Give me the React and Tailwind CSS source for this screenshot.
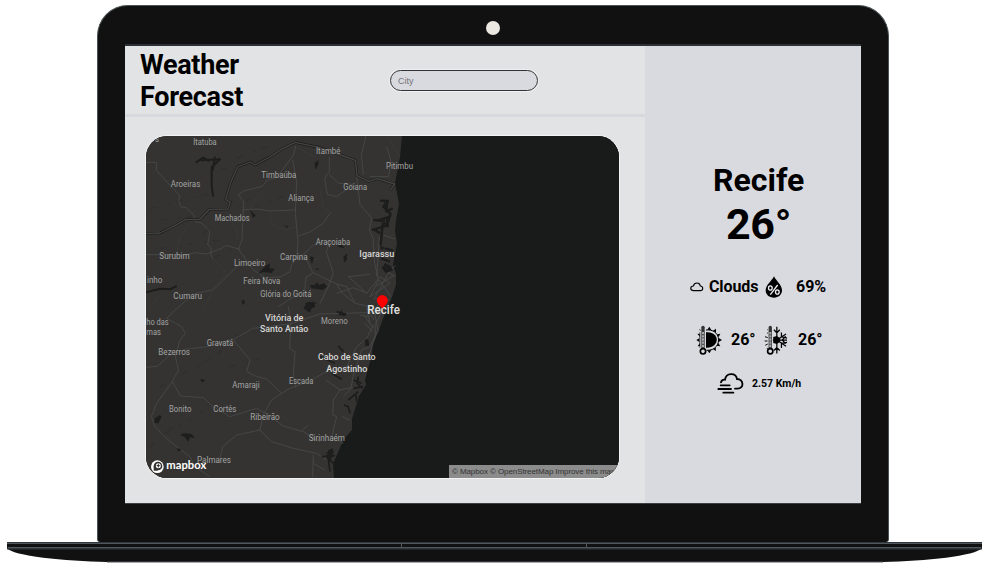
const NORTH_LABELS = [
  ["s", 44, 56, 37], ["Itatuba", 159, 229, 46], ["Itambé", 527, 600, 71],
  ["Pitimbu", 737, 818, 116], ["Timbaúba", 363, 468, 144], ["Aroeiras", 91, 180, 170],
  ["Goiana", 609, 680, 180], ["Aliança", 444, 521, 212], ["Machados", 223, 328, 273],
  ["Surubim", 57, 148, 386], ["Limoeiro", 281, 375, 408], ["Carpina", 419, 502, 389],
  ["Araçoiaba", 526, 630, 345], ["Feira Nova", 309, 420, 463], ["inho", 20, 66, 460],
  ["Cumaru", 99, 185, 506], ["Glória do Goitá", 360, 513, 501],
];

const SOUTH_LABELS = [
  ["ho das", 18, 85, 76], ["mas", 18, 62, 105], ["Gravatá", 199, 279, 137],
  ["Bezerros", 54, 149, 164], ["Moreno", 542, 622, 71], ["Amaraji", 276, 358, 264],
  ["Escada", 446, 519, 253], ["Bonito", 86, 153, 335], ["Cortês", 219, 288, 336],
  ["Ribeirão", 330, 418, 361], ["Sirinhaém", 505, 614, 423], ["Palmares", 170, 272, 490],
];

const CITY_LABELS = [
  ["Vitória de", 374, 489, 62], ["Santo Antão", 359, 504, 96],
  ["Cabo de Santo", 533, 706, 181], ["Agostinho", 558, 681, 215],
];

function Labels({ items, className }) {
  return items.map(([name, x1, x2, y]) => (
    <text key={name} x={x1 + 1} y={y} textLength={x2 - x1} lengthAdjust="spacingAndGlyphs" className={className}>
      {name}
    </text>
  ));
}

const SMALL = "fill-[#a3a3a2] font-[Roboto,sans-serif] text-[26px]";
const LARGE = "fill-[#d8d8d6] font-[Roboto,sans-serif] text-[28px] font-medium";

function Map() {
  return (
    <svg viewBox="146 136 473 342" className="block h-full w-full">
      <rect x="146" y="136" width="473" height="342" fill="#343332" />
      <path d="M402 136 L400 157 L395 183 L399 204 L396 220 L395 231 L397 243 L393 265 L396 274 L396 285 L392 297 L384 316 L378 333 L373 343 L372 354 L365 380 L366 385 L359 396 L352 419 L352 430 L344 439 L339 450 L333 464 L334 478 H619 V136Z" fill="#191b1a" />
      <g transform="translate(140 130) scale(.33333)">
        <g fill="none" stroke="#302f2e" strokeWidth="4" strokeDasharray="22 31 9 18">
          <path d="M30 235L230 185M240 120L430 65M60 270L240 250M290 85L410 40M190 310L330 205M340 235L440 195M60 355L240 330M220 385L300 345" />
        </g>
        <g fill="none" stroke="#454646" strokeWidth="3" strokeLinejoin="round">
          <path d="M18 97L50 97L49 121L87 162L120 198L116 211L122 230L138 233L162 255L160 272L186 280L210 304L203 344L213 352L213 375L220 388" />
          <path d="M467 48L461 75L410 142L382 150L367 169L310 183L295 195L311 215L306 330L295 357L340 419L375 443L420 441L450 425L455 403L470 385L474 335L466 251L470 155L458 90" />
          <path d="M306 240L350 237L390 243L465 240M18 374L138 374L166 368L200 372L247 354L258 346L300 358M305 396L220 479L160 492L105 540" />
          <path d="M568 80L568 124L554 145L562 193L590 200L645 160M568 135L597 160L640 163M647 115L660 223L695 265L688 300L699 324L704 400L716 450L690 500M678 18L664 73L670 133" />
          <path d="M475 388L520 345L550 335M570 250L550 280L508 307L475 318M500 390L518 427L590 462L607 490L646 520L690 530M518 430L498 442L494 479L415 530M570 330L559 366L580 430L567 465L540 520" />
          <path d="M740 50L752 90L746 140L690 140M730 315L765 327M718 320L710 440M718 450L752 500M765 407L743 433L720 475L700 510M765 440L742 425M706 470L763 435M690 500L750 460L720 440L680 490M680 490L625 440L690 433M645 520L620 470L590 462M590 490L640 473L682 490M705 505L750 510" />
        </g>
        <g fill="none" stroke="#3c3c3b" strokeWidth="2">
          <path d="M260 246L285 290L295 325M155 275L120 320L110 375M390 245L393 283L440 300L466 290M370 180L345 205L330 240M220 385L260 430L225 465L190 540M468 50L530 85M575 250L550 230L540 180M550 365L525 390L510 380M60 495L30 535M740 20L780 80" />
        </g>
        <g fill="none" stroke="#1c1d1c" strokeLinejoin="round">
          <path d="M18 310L60 309L106 286L138 268L178 269L208 238L264 237L271 217L257 209L271 160L293 111L330 96L345 105L390 81L427 56L466 37L537 52L610 78L646 91L651 137L687 154L711 146L764 162L750 181" strokeWidth="8" />
          <path d="M18 310L60 309L106 286L138 268L178 269L208 238L264 237L271 217L257 209L271 160L293 111L330 96L345 105L390 81L427 56L466 37L537 52L610 78L646 91L651 137L687 154L711 146L764 162L750 181" strokeWidth="4" stroke="#444443" />
          <path d="M183 91L240 88L215 112L215 170L220 200M167 98L190 83L208 94M225 80L218 120M18 487L60 476L90 478L110 468" strokeWidth="6" />
          <path d="M720 212L744 213L730 230L752 252L743 280L728 281L722 345M742 215L739 244L758 235M696 300L743 286M715 270L750 260M700 270L735 273M700 297L720 310M740 260L744 292M735 355L760 362M733 402L755 420L738 425L727 410M723 385L750 395" strokeWidth="7" />
        </g>
        <g fill="#1d1e1d">
          <path d="M523 100L536 90L535 104L526 119ZM610 380L622 370L620 390L613 398ZM380 405L390 400L388 415L404 416L395 429L370 426L353 432ZM330 240L348 257L338 263ZM508 379L522 382L516 402ZM525 415L540 417L530 420ZM433 285L447 290L440 293ZM503 455L509 465L525 465L530 456L537 465L553 460L561 470L548 480L515 475ZM495 520L520 515L526 530L505 540ZM305 510L315 518L307 525ZM728 410L744 403L756 412L738 430ZM736 210L744 211L740 240L728 230ZM720 345L735 355L723 360ZM592 350L604 340L613 355Z" />
        </g>
        <Labels items={NORTH_LABELS} className={SMALL} />
        <Labels items={[["Igarassu", 657, 762, 381]]} className={LARGE} />
      </g>
      <g transform="translate(140 300) scale(.33333)">
        <g fill="none" stroke="#302f2e" strokeWidth="4" strokeDasharray="16 33 7 20">
          <path d="M140 150L450 60M60 260L260 150M75 400L190 335M270 200L360 175M170 205L300 110M30 440L100 380" />
        </g>
        <g fill="none" stroke="#454646" strokeWidth="3" strokeLinejoin="round">
          <path d="M18 202L52 199L88 167L135 148L200 140L280 118L340 85L450 72L540 42L680 38M106 30L80 55L125 80L136 101L120 120L106 170L116 210L97 245L50 310L34 350L45 380L72 408L105 436L150 470L165 500L210 530" />
          <path d="M97 245L122 288L190 293L220 320L270 350L350 325L385 345L430 378L490 395L540 425M280 120L330 180L320 215L350 230L380 237L425 280L395 300L370 345L360 390L395 425L460 445L530 460L560 480M425 280L450 265L505 245L560 215L620 200L650 140L680 115L700 75M360 390L290 405L248 440L240 475" />
          <path d="M445 20L453 67L449 145L465 155L460 225L468 265M600 270L580 300L578 345L590 350L575 410L610 430M700 20L714 90L690 140L665 150L640 225L633 265L610 290M630 360L605 350M558 240L600 270L640 262M680 25L690 70M520 465L518 530M520 490L555 510M505 375L488 390" />
          <path d="M728 30L705 75L706 110L685 170M680 20L702 60M672 45L700 85M675 70L698 95M715 10L705 50M660 45L690 50" />
        </g>
        <g fill="none" stroke="#1c1d1c" strokeWidth="5">
          <path d="M675 120L685 137M655 230L652 250L667 265M640 265L670 260M648 285L650 305M640 240L665 250M625 300L655 275M612 315L625 320L630 340M560 460L578 455L570 480L580 490M545 470L585 467M565 475L570 515M575 220L605 238M540 170L585 190M590 35L618 43M595 138L610 155" />
        </g>
        <g fill="#1d1e1d">
          <path d="M490 25L505 5L530 8L516 20L510 38ZM595 45L605 28L606 39L620 42L615 48ZM180 241L188 236L195 242L187 247ZM45 355L60 345L65 350L55 370L42 368ZM120 405L130 400L155 402L165 414L150 412L145 425L135 412ZM110 445L125 448L115 455ZM675 120L685 116L687 135L676 138ZM565 450L580 445L570 485L560 475ZM306 2L315 0L310 12Z" />
        </g>
        <Labels items={SOUTH_LABELS} className={SMALL} />
        <Labels items={CITY_LABELS} className={LARGE} />
        <Labels items={[["Recife", 681, 779, 41]]} className="fill-[#e2e2e0] font-[Roboto,sans-serif] text-[37px] font-medium" />
        <circle cx="52" cy="500" r="19" fill="#fff" />
        <circle cx="54" cy="498" r="13" fill="#343332" />
        <path d="M41 498V512H54Z" fill="#343332" />
        <circle cx="55" cy="497" r="7.5" fill="#fff" />
        <path d="M55 490L57 495L62 497L57 499L55 504L53 499L48 497L53 495Z" fill="#343332" />
        <Labels items={[["mapbox", 78, 198, 508]]} className="fill-white font-[Lato,sans-serif] text-[31px] font-bold" />
      </g>
      <path d="M382.3 295.1a5.5 5.5 0 0 1 5.5 5.5c0 2.8-2.6 5-5.5 7.8c-2.9-2.8-5.5-5-5.5-7.8a5.5 5.5 0 0 1 5.5-5.5Z" fill="#f00" />
    </svg>
  );
}

function CloudIcon() {
  return (
    <svg viewBox="31 50 42 30" className="h-[10px] w-[14px]" fill="none" stroke="#000" strokeWidth="3.4">
      <path d="M42 76C30 76 31 62 41 62C44 50 60 50 62 62C72 63 71 76 62 76Z" />
    </svg>
  );
}

function HumidityIcon() {
  return (
    <svg viewBox="255 32 54 66" className="h-[22px] w-[18px]">
      <path d="M282 33C288 46 306 59 306 75C306 89 295 97 282 97C268 97 257 89 257 75C257 59 276 46 282 33Z" />
      <g fill="none" stroke="#eeeef1" strokeWidth="4">
        <path d="M293 59L271 88" />
        <ellipse cx="271" cy="68" rx="5.5" ry="6.5" />
        <ellipse cx="292" cy="80" rx="5.5" ry="6.5" />
      </g>
    </svg>
  );
}

function Thermometer({ x }) {
  return (
    <g transform={`translate(${x} 0)`}>
      <path d="M0 186V250" stroke="#d9dadf" strokeWidth="15" />
      <path d="M0 185V250" stroke="#333" strokeWidth="10" strokeLinecap="round" />
      <path d="M0 199V248" stroke="#a9aaae" strokeWidth="6" strokeDasharray="7 2.5" />
      <circle cx="0" cy="257" r="8" fill="#d9dadf" stroke="#000" strokeWidth="5" />
    </g>
  );
}

function HotIcon() {
  return (
    <svg viewBox="48 178 78 90" className="h-[30px] w-[26px]">
      <path d="M78 200C121 196 121 248 78 246Z" />
      <path d="M78 193C128 188 128 256 80 254" fill="none" stroke="#000" strokeWidth="3" />
      <path d="M82 192L88 183L94 193ZM99 195L108 189L108 201ZM111 206L121 204L116 214ZM116 217L126 223L116 229ZM115 232L121 242L110 240ZM107 245L108 256L99 251ZM94 254L88 263L82 254ZM59 205L52 204L60 214ZM58 218L49 223L58 229ZM59 233L53 242L60 241ZM60 196L58 190L66 194Z" />
      <path d="M60 200V246" stroke="#000" strokeWidth="3" />
      <Thermometer x={69} />
    </svg>
  );
}

function ColdIcon() {
  return (
    <svg viewBox="252 178 76 90" className="h-[30px] w-[25px]">
      <g fill="none" stroke="#000" strokeWidth="3.8">
        <path d="M291 183V264M278 223H322M291 223L319 205M291 223L319 242M282 192L291 201L300 192M282 255L291 246L300 255M305 200V213L322 217M305 247V234L322 230M318 212L307 223L318 234" />
        <path d="M261 201L267 205M255 213L264 216M254 226H263M256 239L264 235M261 250L267 244M262 191L267 195" strokeWidth="3" />
      </g>
      <path d="M280 214L291 211L301 218V228L291 235L280 232Z" />
      <Thermometer x={271} />
    </svg>
  );
}

function WindIcon() {
  return (
    <svg viewBox="112 323 81 63" className="h-[21px] w-[27px]" fill="none" stroke="#000" strokeWidth="5.5" strokeLinecap="round">
      <path d="M124 351C125 345 131 342 136 343C139 321 169 321 172 341C192 341 195 370 173 370H166M123 360H150M116 371H154M131 382H161" />
    </svg>
  );
}

export default function App() {
  return (
    <main className="flex h-[570px] w-[988px] flex-col items-center overflow-hidden bg-white pt-[5px] font-[Roboto,sans-serif] text-black">
      <section className="mr-[2px] flex h-[537px] w-[792px] shrink-0 flex-col items-center rounded-t-[31px] rounded-b-[3px] border border-b-0 border-[#4b5356] bg-[#111]">
        <div className="flex h-[40px] w-[736px] shrink-0 items-center justify-center border-b-2 border-[#2b3036] pt-[5px]">
          <span className="size-[14px] rounded-full bg-[#ebe7e1]" />
        </div>
        <div className="flex h-[458px] w-[736px] shrink-0 border-b border-[#3d4043]">
          <div className="flex w-[520px] flex-col bg-[#e2e3e5]">
            <header className="flex h-[71px] shrink-0 border-b-[3px] border-[#d8d9df]">
              <h1 className="ml-[15px] w-[130px] pt-[3px] text-[27px] leading-[32px] font-bold tracking-[-0.3px]">Weather Forecast</h1>
              <input
                placeholder="City"
                className="mt-[24px] ml-[120px] h-[21px] w-[148px] rounded-full border border-[#333] bg-[#d9dadf] px-[7px] font-['Liberation_Sans',sans-serif] text-[9px] outline-none ring-1 ring-[#f0f0f2] placeholder:text-[#74757a]"
              />
            </header>
            <div className="mt-[19px] ml-[21px] grid h-[342px] w-[473px] overflow-hidden rounded-[21px] bg-[#191b1a] ring-1 ring-[#f3f3f3]">
              <div className="col-start-1 row-start-1 h-[342px] w-[473px]">
                <Map />
              </div>
              <p className="z-10 col-start-1 row-start-1 h-[13px] w-[170px] self-end justify-self-end overflow-hidden bg-[#8b8c8b] pl-[3px] font-['Liberation_Sans',sans-serif] text-[8px] leading-[13px] tracking-[-0.09px] whitespace-nowrap text-[#333]">
                © Mapbox © OpenStreetMap Improve this map
              </p>
            </div>
          </div>
          <aside className="flex flex-1 flex-col bg-[#d9dadf] pt-[113px]">
            <h2 className="ml-[68px] h-[42px] text-[32px] leading-[42px] font-bold">Recife</h2>
            <p className="ml-[81px] h-[46px] text-[43px] leading-[46px] font-bold tracking-[-0.3px]">26°</p>
            <div className="mt-[28px] ml-[45px] flex h-[24px] items-center text-[16px] font-bold">
              <CloudIcon />
              <span className="ml-[5px] w-[56px] tracking-[-0.1px]">Clouds</span>
              <HumidityIcon />
              <span className="ml-[13px]">69%</span>
            </div>
            <div className="mt-[26px] ml-[51px] flex h-[30px] items-center text-[16px] font-bold">
              <HotIcon />
              <span className="ml-[9px] w-[33px]">26°</span>
              <ColdIcon />
              <span className="ml-[9px]">26°</span>
            </div>
            <div className="mt-[18px] ml-[72px] flex h-[21px] items-center text-[10.5px] font-bold">
              <WindIcon />
              <span className="ml-[8px]">2.57 Km/h</span>
            </div>
          </aside>
        </div>
      </section>
      <svg viewBox="7 542 976 22" className="ml-[2px] h-[22px] w-[976px] shrink-0">
        <path d="M7 542H982V548C976 556 925 561 883 562H107C65 561 12 556 7 548Z" fill="#111" />
        <path d="M7 542.5H982M7 548.5H982" stroke="#30363b" strokeWidth="2" />
        <path d="M7 543.5H982M8 547.5H981M401.5 543V548M586.5 543V548" stroke="#50585e" strokeWidth="1" />
        <path d="M107 562H883" stroke="#55535a" strokeWidth="1" />
      </svg>
    </main>
  );
}
